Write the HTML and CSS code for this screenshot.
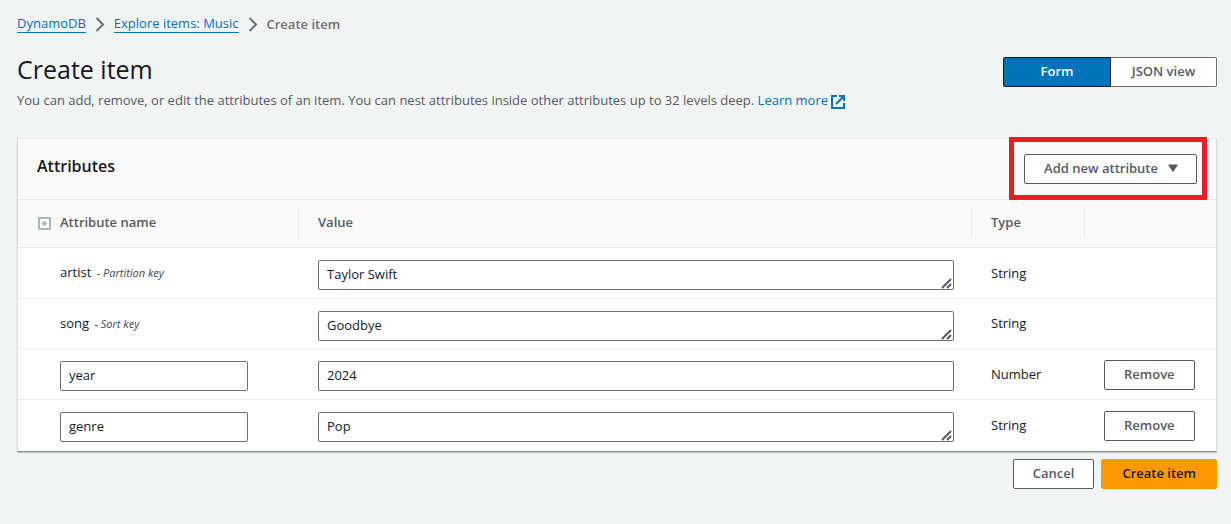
FILE: index.html
```html
<!DOCTYPE html>
<html lang="en">
<head>
<meta charset="utf-8">
<title>Create item</title>
<link rel="stylesheet" href="styles.css">
</head>
<body>
<main class="page">
  <nav class="crumbs" aria-label="Breadcrumbs">
    <a class="crumb" href="#">DynamoDB</a>
    <svg class="chevron" viewBox="0 0 10 16" aria-hidden="true"><path d="M1.500 2 8 8.500l-6.500 6.500"/></svg>
    <a class="crumb" href="#">Explore items: Music</a>
    <svg class="chevron" viewBox="0 0 10 16" aria-hidden="true"><path d="M1.500 2 8 8.500l-6.500 6.500"/></svg>
    <span class="crumb-current">Create item</span>
  </nav>

  <header class="head">
    <div>
      <h1 class="title">Create item</h1>
      <p class="intro">You can add, remove, or edit the attributes of an item. You can nest attributes inside other attributes up to 32 levels deep. <a class="learn" href="#">Learn more <svg class="external" viewBox="0 0 14 14" aria-hidden="true"><path d="M6 1H1v12h12V8M8 1h5v5M13 1 5 9"/></svg></a></p>
    </div>
    <div class="segments">
      <button class="segment segment-on" type="button">Form</button>
      <button class="segment" type="button">JSON view</button>
    </div>
  </header>

  <form class="form">
    <section class="card">
      <div class="card-head">
        <h2 class="card-title">Attributes</h2>
        <div class="marked">
          <button class="btn btn-menu" type="button">Add new attribute <svg class="caret" viewBox="0 0 10 8" aria-hidden="true"><path d="M1 .5h8a.6.6 0 0 1 .5 1L5.500 7.500a.6.6 0 0 1-1 0L.5 1.500a.6.6 0 0 1 .5-1z"/></svg></button>
        </div>
      </div>
      <table class="grid">
        <colgroup><col class="col-name"><col><col class="col-type"><col class="col-action"></colgroup>
        <thead>
          <tr>
            <th><div class="th th-name"><button class="expand" type="button" aria-label="Expand all"><svg class="expand-icon" viewBox="0 0 13 13" aria-hidden="true"><path d="M1 1h11v11H1zM6.500 4v5M4 6.500h5"/></svg></button>Attribute name</div></th>
            <th><div class="th">Value</div></th>
            <th><div class="th">Type</div></th>
            <th><div class="th th-last"></div></th>
          </tr>
        </thead>
        <tbody>
          <tr>
            <td class="name"><label for="v1">artist <em class="key">- Partition key</em></label></td>
            <td class="value"><div class="area"><textarea class="field" id="v1" rows="1">Taylor Swift</textarea><svg class="grip" viewBox="0 0 11 11" aria-hidden="true"><path d="M1 10l9-9M6 10l4-4"/></svg></div></td>
            <td>String</td><td></td>
          </tr>
          <tr>
            <td class="name"><label for="v2">song <em class="key">- Sort key</em></label></td>
            <td class="value"><div class="area"><textarea class="field" id="v2" rows="1">Goodbye</textarea><svg class="grip" viewBox="0 0 11 11" aria-hidden="true"><path d="M1 10l9-9M6 10l4-4"/></svg></div></td>
            <td>String</td><td></td>
          </tr>
          <tr>
            <td class="name name-edit"><input class="field" type="text" value="year" aria-label="Attribute name"></td>
            <td class="value"><input class="field" type="text" value="2024" aria-label="Value of year"></td>
            <td>Number</td><td class="action"><button class="btn btn-remove" type="button">Remove</button></td>
          </tr>
          <tr>
            <td class="name name-edit"><input class="field" type="text" value="genre" aria-label="Attribute name"></td>
            <td class="value"><div class="area"><textarea class="field" rows="1" aria-label="Value of genre">Pop</textarea><svg class="grip" viewBox="0 0 11 11" aria-hidden="true"><path d="M1 10l9-9M6 10l4-4"/></svg></div></td>
            <td>String</td><td class="action"><button class="btn btn-remove" type="button">Remove</button></td>
          </tr>
        </tbody>
      </table>
    </section>
    <div class="actions">
      <button class="btn" type="button">Cancel</button>
      <button class="btn btn-primary" type="submit">Create item</button>
    </div>
  </form>
</main>
</body>
</html>
```
FILE: styles.css
```css
* { box-sizing: border-box; }
body {
  margin: 0;
  background: #f2f3f3;
  color: #16191f;
  font: 13px/20px "Open Sans", "Noto Sans", sans-serif;
}
.page { padding: 15px 14px 32px 17px; }
.crumbs { display: flex; align-items: center; gap: 9px; line-height: 18px; }
.crumb { color: #0073bb; text-decoration: none; line-height: 17px; border-bottom: 1px solid #0073bb; }
.crumb-current { color: #687078; font-weight: 600; }
.chevron { width: 10px; height: 16px; fill: none; stroke: #687078; stroke-width: 2; }
.head { display: flex; justify-content: space-between; align-items: flex-start; margin-top: 19px; }
.title { margin: 0; font-size: 25px; line-height: 34px; font-weight: 400; }
.intro { margin: 4px 0 0; color: #545b64; }
.learn { color: #0073bb; text-decoration: none; }
.external { width: 14px; height: 14px; vertical-align: -4px; fill: none; stroke: #0073bb; stroke-width: 2; }
.segments { display: flex; margin-top: 5px; }
.segment {
  height: 30px;
  min-width: 106px;
  padding: 0 18px 2px;
  border: 1px solid #687078;
  border-left: 0;
  border-radius: 0 2px 2px 0;
  background: #fff;
  color: #545b64;
  font: inherit;
  font-weight: 600;
}
.segment-on { min-width: 108px; border: 1px solid #16191f; border-radius: 2px 0 0 2px; background: #0073bb; color: #fff; }
.form { margin-top: 28px; }
.card {
  background: #fff;
  border: 1px solid #eaeded;
  border-right-color: #d5dbdb;
  border-left-color: #d5dbdb;
  border-bottom-color: #879196;
  box-shadow: 0 1px 1px rgba(0, 28, 36, .2);
}
.card-head {
  display: flex;
  justify-content: space-between;
  align-items: flex-start;
  padding: 15px 19px;
  background: #fafafa;
}
.card-title { margin: 0; font-size: 16px; line-height: 24px; font-weight: 600; }
.marked { position: relative; }
.marked::after {
  content: "";
  position: absolute;
  inset: -17px -10px -16px -15px;
  border: 5px solid #ed1c24;
  pointer-events: none;
}
.btn {
  height: 30px;
  padding: 0 19px 2px;
  border: 1px solid #545b64;
  border-radius: 2px;
  background: #fff;
  color: #545b64;
  font: inherit;
  font-weight: 600;
  white-space: nowrap;
}
.btn-menu { display: flex; align-items: center; gap: 10px; padding-right: 18px; }
.btn-remove { display: block; }
.caret { width: 10px; height: 8px; fill: #545b64; }
.btn-primary { border-color: #ff9900; background: #ff9900; color: #16191f; padding: 0 20px 2px; }
.grid { width: 100%; table-layout: fixed; border-collapse: collapse; }
.col-name { width: 281px; }
.col-type { width: 113px; }
.col-action { width: 131px; }
th { height: 48px; padding: 0; border: solid #eaeded; border-width: 1px 0; background: #fafafa; text-align: left; vertical-align: top; }
.th { height: 30px; margin: 8px 0; padding: 4px 19px; border-right: 1px solid #eaeded; color: #545b64; font-weight: 600; line-height: 20px; }
.th-name { display: flex; align-items: flex-start; gap: 9px; padding-left: 20px; }
.th-last { border-right: 0; }
.expand { display: flex; padding: 5px 0 0; border: 0; background: none; }
.expand-icon { width: 13px; height: 13px; fill: none; stroke: #aab7b8; stroke-width: 2; }
td { height: 51px; padding: 0 19px 1px; border-top: 1px solid #eaeded; vertical-align: middle; }
tr:nth-child(2) td { height: 50px; }
.value { padding: 4px 18px 0 19px; }
.action { padding-top: 1px; padding-bottom: 0; }
.name { padding-left: 42px; padding-right: 51px; }
.name-edit { padding-top: 4px; padding-bottom: 0; }
.key { margin-left: 2px; font-size: 11px; color: #414750; }
.area { position: relative; display: flex; }
.field {
  display: block;
  width: 100%;
  height: 30px;
  padding: 3px 8px 5px;
  border: 1px solid #687078;
  border-radius: 2px;
  background: #fff;
  color: #16191f;
  font: inherit;
  resize: none;
  overflow: hidden;
}
.grip { position: absolute; right: 2px; bottom: 1px; width: 11px; height: 11px; stroke: #545b64; stroke-width: 2; pointer-events: none; }
.actions { display: flex; justify-content: flex-end; gap: 7px; margin-top: 7px; }
```
